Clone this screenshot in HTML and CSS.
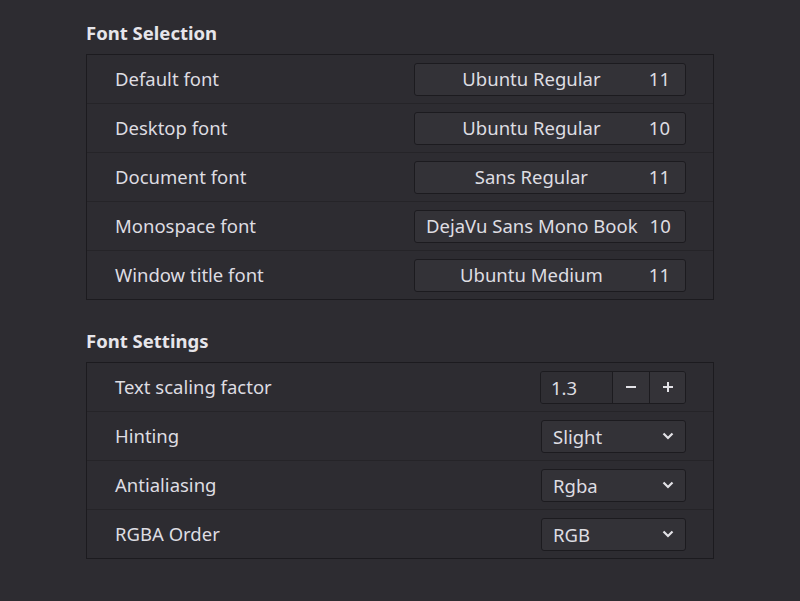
FILE: index.html
```html
<!DOCTYPE html>
<html>
<head>
<meta charset="utf-8">
<link rel="stylesheet" href="styles.css">
</head>
<body>
<div class="page">
  <section class="section">
    <h2 class="title">Font Selection</h2>
    <div class="frame">
      <div class="row"><span class="label">Default font</span>
        <div class="fontbtn"><span class="fname">Ubuntu Regular</span><span class="fsize">11</span></div></div>
      <div class="row"><span class="label">Desktop font</span>
        <div class="fontbtn"><span class="fname">Ubuntu Regular</span><span class="fsize">10</span></div></div>
      <div class="row"><span class="label">Document font</span>
        <div class="fontbtn"><span class="fname">Sans Regular</span><span class="fsize">11</span></div></div>
      <div class="row"><span class="label">Monospace font</span>
        <div class="fontbtn"><span class="fname">DejaVu Sans Mono Book</span><span class="fsize">10</span></div></div>
      <div class="row"><span class="label">Window title font</span>
        <div class="fontbtn"><span class="fname">Ubuntu Medium</span><span class="fsize">11</span></div></div>
    </div>
  </section>
  <section class="section second">
    <h2 class="title">Font Settings</h2>
    <div class="frame">
      <div class="row"><span class="label">Text scaling factor</span>
        <div class="spin">
          <span class="spin-entry">1.3</span>
          <span class="spin-btn minus"><svg width="12" height="12" viewBox="0 0 12 12"><path d="M1 6h10" stroke="#e2e1e6" stroke-width="2"/></svg></span>
          <span class="spin-btn"><svg width="12" height="12" viewBox="0 0 12 12"><path d="M1 6h10M6 1v10" stroke="#e2e1e6" stroke-width="2"/></svg></span>
        </div></div>
      <div class="row"><span class="label">Hinting</span>
        <div class="combo"><span>Slight</span><svg class="chev" width="12" height="8" viewBox="0 0 12 8"><path d="M1.5 1.5l4.5 4.5 4.5-4.5" fill="none" stroke="#e2e1e6" stroke-width="2.2"/></svg></div></div>
      <div class="row"><span class="label">Antialiasing</span>
        <div class="combo"><span>Rgba</span><svg class="chev" width="12" height="8" viewBox="0 0 12 8"><path d="M1.5 1.5l4.5 4.5 4.5-4.5" fill="none" stroke="#e2e1e6" stroke-width="2.2"/></svg></div></div>
      <div class="row"><span class="label">RGBA Order</span>
        <div class="combo"><span>RGB</span><svg class="chev" width="12" height="8" viewBox="0 0 12 8"><path d="M1.5 1.5l4.5 4.5 4.5-4.5" fill="none" stroke="#e2e1e6" stroke-width="2.2"/></svg></div></div>
    </div>
  </section>
</div>
</body>
</html>
```

FILE: styles.css
```css
html, body {
  margin: 0;
  padding: 0;
  background: #2d2c31;
  color: #dedde2;
  font-family: "Noto Sans", "DejaVu Sans", sans-serif;
  font-size: 18.5px;
}
.page {
  width: 628px;
  padding: 22px 0 0 86px;
}
.section.second {
  margin-top: 30px;
}
.title {
  margin: 0 0 10px 0;
  font-size: 18.5px;
  line-height: 22px;
  font-weight: bold;
  color: #e6e5ea;
}
.frame {
  border: 1px solid #1c1b1f;
  background: #2d2c31;
}
.row {
  height: 48px;
  display: flex;
  align-items: center;
  justify-content: space-between;
  padding: 0 27px 0 28px;
  white-space: nowrap;
}
.row + .row {
  border-top: 1px solid #252428;
}
.label {
  line-height: 22px;
}
.fontbtn {
  width: 244px;
  height: 31px;
  border: 1px solid #1c1b1f;
  border-radius: 3px;
  background: #333237;
  display: flex;
  align-items: center;
  padding: 0 15px 0 11px;
  line-height: 22px;
}
.fname {
  flex: 1;
  text-align: center;
}
.fsize {
  margin-left: 12px;
}
.spin {
  display: flex;
  height: 31px;
  border: 1px solid #1c1b1f;
  border-radius: 3px;
  overflow: hidden;
}
.spin-entry {
  width: 61px;
  padding-left: 10px;
  display: flex;
  align-items: center;
  background: #2f2e33;
}
.spin-btn {
  width: 35px;
  border-left: 1px solid #1c1b1f;
  background: #343338;
  display: flex;
  align-items: center;
  justify-content: center;
}
.spin-btn.minus {
  width: 36px;
}
.combo {
  width: 121px;
  height: 31px;
  border: 1px solid #1c1b1f;
  border-radius: 3px;
  background: #333237;
  display: flex;
  align-items: center;
  justify-content: space-between;
  padding: 0 11px 0 11px;
}
.chev {
  display: block;
}
```
